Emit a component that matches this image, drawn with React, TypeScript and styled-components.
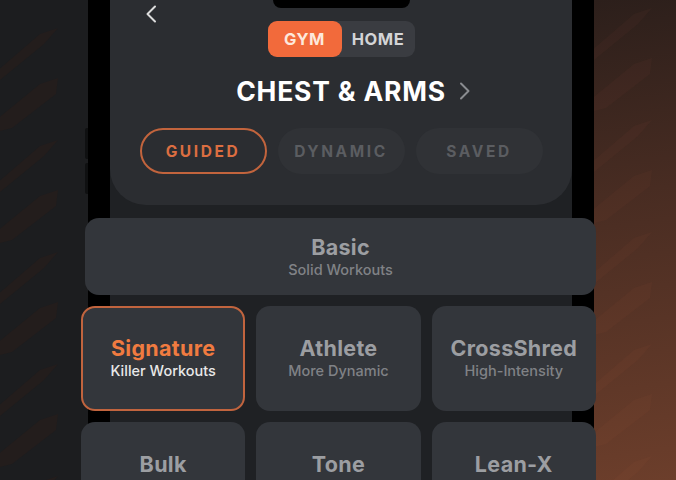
import React from 'react';
import styled, { createGlobalStyle } from 'styled-components';

const GlobalStyle = createGlobalStyle`
  html, body {
    margin: 0;
    padding: 0;
    background: #1c1d1f;
  }
  body {
    font-family: Inter, 'Noto Sans', 'Liberation Sans', sans-serif;
    -webkit-font-smoothing: antialiased;
  }
  * {
    box-sizing: border-box;
  }
`;

const Stage = styled.div`
  width: 676px;
  height: 480px;
  display: flex;
  overflow: hidden;
`;

const Side = styled.div<{ $warm?: boolean }>`
  flex: ${(p) => (p.$warm ? '1' : '0 0 88px')};
  background: ${(p) =>
    p.$warm
      ? 'linear-gradient(172deg, #2c1f1b 0%, #482c22 40%, #6c3e2b 100%)'
      : '#1c1d1f'};
  svg {
    display: block;
  }
`;

const Phone = styled.div`
  flex: 0 0 506px;
  background: #000;
  padding: 0 22px;
  display: flex;
  position: relative;
`;

const SideButton = styled.span<{ $top: number }>`
  position: absolute;
  left: -3px;
  top: ${(p) => p.$top}px;
  width: 3px;
  height: 31px;
  border-radius: 2px 0 0 2px;
  background: #0f1011;
`;

const Screen = styled.div`
  flex: 1;
  background: #1f2124;
  display: flex;
  flex-direction: column;
`;

const Header = styled.header`
  flex: 0 0 205px;
  background: #2b2d31;
  border-radius: 0 0 36px 36px;
  display: flex;
  flex-direction: column;
  align-items: center;
  position: relative;
`;

const Notch = styled.div`
  position: absolute;
  top: 0;
  left: 50%;
  margin-left: -68px;
  width: 137px;
  height: 8px;
  background: #000;
  border-radius: 0 0 11px 11px;
`;

const TopRow = styled.div`
  align-self: stretch;
  height: 21px;
  padding: 5px 0 0 34px;
`;

const BackButton = styled.button`
  background: none;
  border: 0;
  padding: 0;
  width: 14px;
  height: 18px;
  display: block;
  cursor: pointer;
`;

const Toggle = styled.div`
  display: flex;
  height: 36px;
  background: #3a3c41;
  border-radius: 9px;
`;

const Segment = styled.div<{ $active?: boolean }>`
  width: ${(p) => (p.$active ? 74 : 73)}px;
  display: flex;
  align-items: center;
  justify-content: center;
  border-radius: 9px;
  font-size: 16.5px;
  font-weight: 700;
  letter-spacing: 0.5px;
  background: ${(p) => (p.$active ? '#f26a3b' : 'transparent')};
  color: ${(p) => (p.$active ? '#fde8dc' : '#d3d4d6')};
`;

const TitleRow = styled.h1`
  margin: 19px 0 0;
  position: relative;
  font-size: 26.5px;
  line-height: 30px;
  font-weight: 700;
  letter-spacing: 0.8px;
  color: #ffffff;
`;

const TitleChevron = styled.span`
  position: absolute;
  left: calc(100% + 13px);
  top: 6px;
  svg {
    display: block;
  }
`;

const Tabs = styled.div`
  margin-top: 22px;
  display: flex;
  gap: 11px;
`;

const Tab = styled.div<{ $active?: boolean }>`
  width: 127px;
  height: 46px;
  border-radius: 23px;
  display: flex;
  align-items: center;
  justify-content: center;
  font-size: 15.5px;
  font-weight: 700;
  letter-spacing: 2.6px;
  border: 2px solid ${(p) => (p.$active ? '#c2643d' : 'transparent')};
  background: ${(p) => (p.$active ? 'transparent' : '#303236')};
  color: ${(p) => (p.$active ? '#dc6e41' : '#5b5d61')};
`;

const Grid = styled.div`
  flex-shrink: 0;
  position: relative;
  z-index: 1;
  margin: 13px -24px 0 -29px;
  display: grid;
  grid-template-columns: repeat(3, 1fr);
  grid-template-rows: 77px;
  grid-auto-rows: 105px;
  gap: 11px;
`;

const Card = styled.div<{ $wide?: boolean; $selected?: boolean }>`
  grid-column: ${(p) => (p.$wide ? '1 / -1' : 'auto')};
  margin-left: ${(p) => (p.$wide ? 4 : 0)}px;
  background: #33363b;
  border-radius: 14px;
  border: 2px solid ${(p) => (p.$selected ? '#c1643e' : 'transparent')};
  display: flex;
  flex-direction: column;
  align-items: center;
  justify-content: ${(p) => (p.$wide ? 'center' : 'flex-start')};
  padding-top: ${(p) => (p.$wide ? 0 : 27)}px;
  gap: 1px;
`;

const CardTitle = styled.div<{ $selected?: boolean }>`
  font-size: 21.5px;
  line-height: 26px;
  font-weight: 700;
  letter-spacing: 0.3px;
  color: ${(p) => (p.$selected ? '#f07b40' : '#9c9ea2')};
`;

const CardSub = styled.div<{ $selected?: boolean }>`
  font-size: 14.5px;
  line-height: 18px;
  font-weight: 500;
  color: ${(p) => (p.$selected ? '#e8e8e8' : '#808286')};
`;

const Stripes: React.FC<{ color: string; offset?: number }> = ({ color, offset = 0 }) => (
  <svg width="100%" height="480" viewBox="0 0 88 480" preserveAspectRatio="xMinYMin slice">
    {[0, 1, 2, 3, 4].map((i) => {
      const y = 28 + i * 112 + offset;
      return (
        <g key={i} fill={color}>
          <polygon points={`-4,${y + 44} 40,${y + 6} 58,${y} 44,${y + 16} 0,${y + 52}`} />
          <polygon points={`-4,${y + 92} 40,${y + 56} 58,${y + 50} 56,${y + 66} 12,${y + 100} -4,${y + 104}`} />
        </g>
      );
    })}
  </svg>
);

const Chevron: React.FC<{ dir: 'left' | 'right'; color: string }> = ({ dir, color }) => (
  <svg width="12" height="18" viewBox="0 0 12 18" fill="none">
    <path
      d={dir === 'left' ? 'M10 1.5L2.5 9L10 16.5' : 'M2 1.5L9.5 9L2 16.5'}
      stroke={color}
      strokeWidth="2"
      strokeLinecap="round"
      strokeLinejoin="round"
    />
  </svg>
);

// bottom row is cut by the screen edge, subtitles sit below the fold
const workouts: { title: string; sub?: string; selected?: boolean }[] = [
  { title: 'Signature', sub: 'Killer Workouts', selected: true },
  { title: 'Athlete', sub: 'More Dynamic' },
  { title: 'CrossShred', sub: 'High-Intensity' },
  { title: 'Bulk' },
  { title: 'Tone' },
  { title: 'Lean-X' },
];

export default function App() {
  return (
    <>
      <GlobalStyle />
      <Stage>
        <Side>
          <Stripes color="#231d1c" />
        </Side>
        <Phone>
          <SideButton $top={128} />
          <SideButton $top={163} />
          <Screen>
            <Header>
              <Notch />
              <TopRow>
                <BackButton aria-label="Back">
                  <Chevron dir="left" color="#dcdcdc" />
                </BackButton>
              </TopRow>
              <Toggle>
                <Segment $active>GYM</Segment>
                <Segment>HOME</Segment>
              </Toggle>
              <TitleRow>
                CHEST &amp; ARMS
                <TitleChevron>
                  <Chevron dir="right" color="#8a8c90" />
                </TitleChevron>
              </TitleRow>
              <Tabs>
                <Tab $active>GUIDED</Tab>
                <Tab>DYNAMIC</Tab>
                <Tab>SAVED</Tab>
              </Tabs>
            </Header>
            <Grid>
              <Card $wide>
                <CardTitle>Basic</CardTitle>
                <CardSub>Solid Workouts</CardSub>
              </Card>
              {workouts.map((w) => (
                <Card key={w.title} $selected={w.selected}>
                  <CardTitle $selected={w.selected}>{w.title}</CardTitle>
                  {w.sub && <CardSub $selected={w.selected}>{w.sub}</CardSub>}
                </Card>
              ))}
            </Grid>
          </Screen>
        </Phone>
        <Side $warm>
          <Stripes color="rgba(255,140,90,0.03)" offset={-20} />
        </Side>
      </Stage>
    </>
  );
}
